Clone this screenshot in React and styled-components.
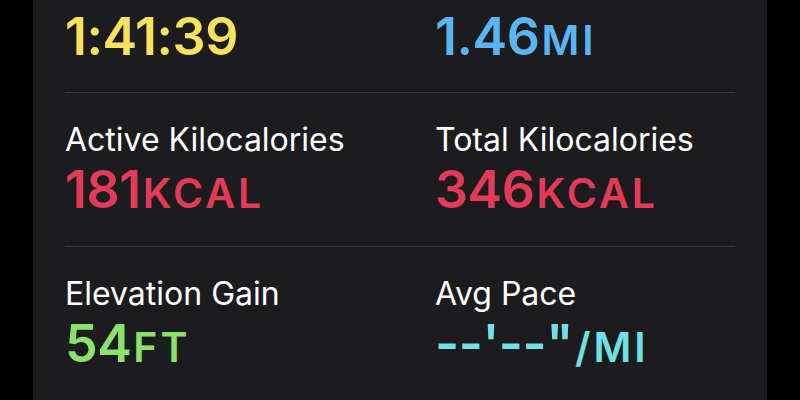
import styled, { createGlobalStyle } from "styled-components";

const GlobalStyle = createGlobalStyle`
  html, body {
    margin: 0;
    padding: 0;
    background: #000;
  }
  body {
    font-family: "Inter", "Liberation Sans", sans-serif;
    overflow: hidden;
  }
`;

// page holds the card
const Page = styled.div`
  width: 800px;
  height: 400px;
  overflow: hidden;
  background: #000;
`;

const Card = styled.section`
  margin: 0 33px;
  background: #1c1c1e;
  padding: 0 32px 40px;
`;

const Row = styled.div`
  display: grid;
  grid-template-columns: 370px 1fr;
  padding: ${(props) => (props.compact ? "9px 0 27px" : "27px 0 28px")};
  border-bottom: ${(props) => (props.last ? "none" : "1px solid #38383a")};
`;

const Metric = styled.div`
  display: flex;
  flex-direction: column;
  gap: 2px;
`;

const Label = styled.div`
  color: #fff;
  font-size: 32px;
  line-height: 40px;
  font-weight: 400;
  white-space: nowrap;
`;

const Value = styled.div`
  color: ${(props) => props.color};
  font-size: 52px;
  line-height: 56px;
  height: 56px;
  font-weight: 600;
  white-space: nowrap;
  letter-spacing: -0.5px;
`;

const Unit = styled.span`
  font-size: 41px;
  line-height: 1;
  font-weight: 600;
  text-transform: uppercase;
  letter-spacing: 3px;
  margin-left: 2px;
`;

const rows = [
  [
    { label: "", value: "1:41:39", unit: "", color: "#f8e15b" },
    { label: "", value: "1.46", unit: "mi", color: "#5ab6f3" },
  ],
  [
    { label: "Active Kilocalories", value: "181", unit: "kcal", color: "#e43a5a" },
    { label: "Total Kilocalories", value: "346", unit: "kcal", color: "#e43a5a" },
  ],
  [
    { label: "Elevation Gain", value: "54", unit: "ft", color: "#8ce06c" },
    { label: "Avg Pace", value: "--'--\"", unit: "/mi", color: "#6fe1e3" },
  ],
];

export default function App() {
  return (
    <Page>
      <GlobalStyle />
      <Card>
        {rows.map((row, i) => (
          <Row key={i} compact={i === 0} last={i === rows.length - 1}>
            {row.map((m) => (
              <Metric key={m.value}>
                {m.label && <Label>{m.label}</Label>}
                <Value color={m.color}>
                  {m.value}
                  {m.unit && <Unit>{m.unit}</Unit>}
                </Value>
              </Metric>
            ))}
          </Row>
        ))}
      </Card>
    </Page>
  );
}
